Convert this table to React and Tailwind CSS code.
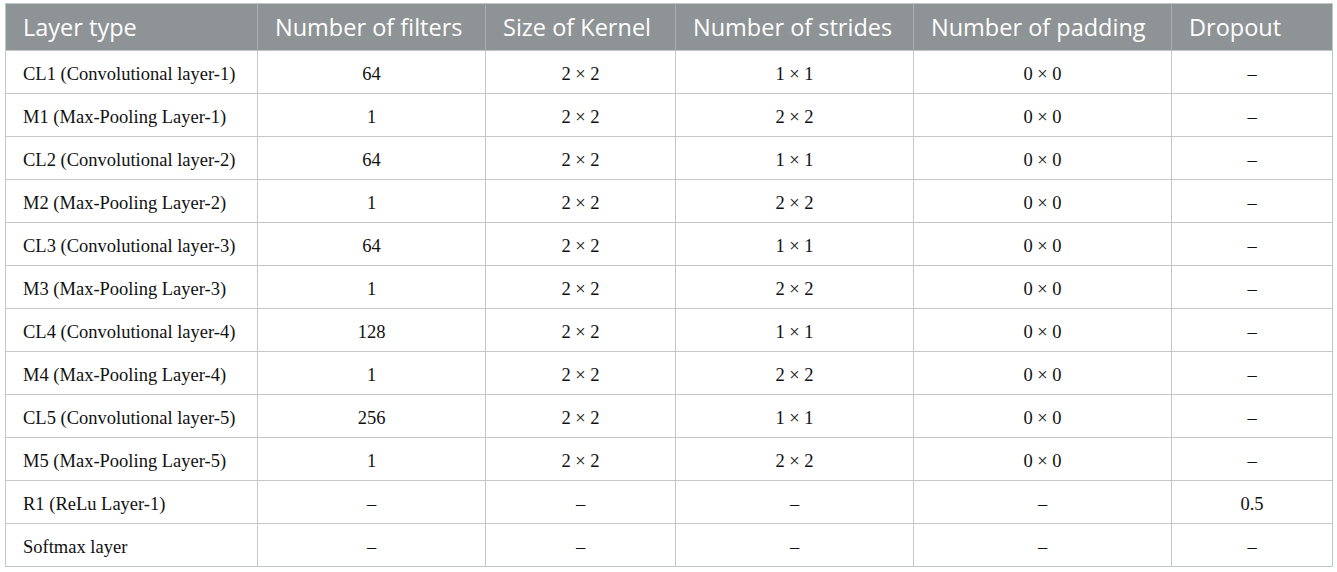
const headers = [
  "Layer type",
  "Number of filters",
  "Size of Kernel",
  "Number of strides",
  "Number of padding",
  "Dropout"
];

const widths = ["w-[252px]", "w-[228px]", "w-[190px]", "w-[238px]", "w-[258px]", "w-[161px]"];

const rows = [
  ["CL1 (Convolutional layer-1)", "64", "2 × 2", "1 × 1", "0 × 0", "–"],
  ["M1 (Max-Pooling Layer-1)", "1", "2 × 2", "2 × 2", "0 × 0", "–"],
  ["CL2 (Convolutional layer-2)", "64", "2 × 2", "1 × 1", "0 × 0", "–"],
  ["M2 (Max-Pooling Layer-2)", "1", "2 × 2", "2 × 2", "0 × 0", "–"],
  ["CL3 (Convolutional layer-3)", "64", "2 × 2", "1 × 1", "0 × 0", "–"],
  ["M3 (Max-Pooling Layer-3)", "1", "2 × 2", "2 × 2", "0 × 0", "–"],
  ["CL4 (Convolutional layer-4)", "128", "2 × 2", "1 × 1", "0 × 0", "–"],
  ["M4 (Max-Pooling Layer-4)", "1", "2 × 2", "2 × 2", "0 × 0", "–"],
  ["CL5 (Convolutional layer-5)", "256", "2 × 2", "1 × 1", "0 × 0", "–"],
  ["M5 (Max-Pooling Layer-5)", "1", "2 × 2", "2 × 2", "0 × 0", "–"],
  ["R1 (ReLu Layer-1)", "–", "–", "–", "–", "0.5"],
  ["Softmax layer", "–", "–", "–", "–", "–"]
];

const App = () => {
  return (
    <div className="bg-white w-[1337px] h-[572px] pt-[3px] pl-[5px]">
      <table className="border-collapse border border-[#bcc8c2] table-fixed w-[1327px]">
        <thead>
          <tr className="bg-[#8e9396] h-[47px]">
            {headers.map((h, i) => (
              <th
                key={h}
                className={`${widths[i]} text-left font-normal text-white text-[23.5px] leading-none pt-[2px] pl-[17px] border-l border-[#a9aeb0] first:border-l-0 font-['Open_Sans',sans-serif]`}
              >
                {h}
              </th>
            ))}
          </tr>
        </thead>
        <tbody>
          {rows.map((r) => (
            <tr key={r[0]} className="h-[43px] border-t border-[#c4c7c6]">
              {r.map((c, j) => (
                <td
                  key={j}
                  className={`border-l border-[#c4c7c6] text-[18.5px] leading-none pt-[5px] text-[#111] font-['Liberation_Serif',serif] ${
                    j === 0 ? "text-left pl-[17px]" : "text-center"
                  }`}
                >
                  {c}
                </td>
              ))}
            </tr>
          ))}
        </tbody>
      </table>
    </div>
  );
};

export default App;
